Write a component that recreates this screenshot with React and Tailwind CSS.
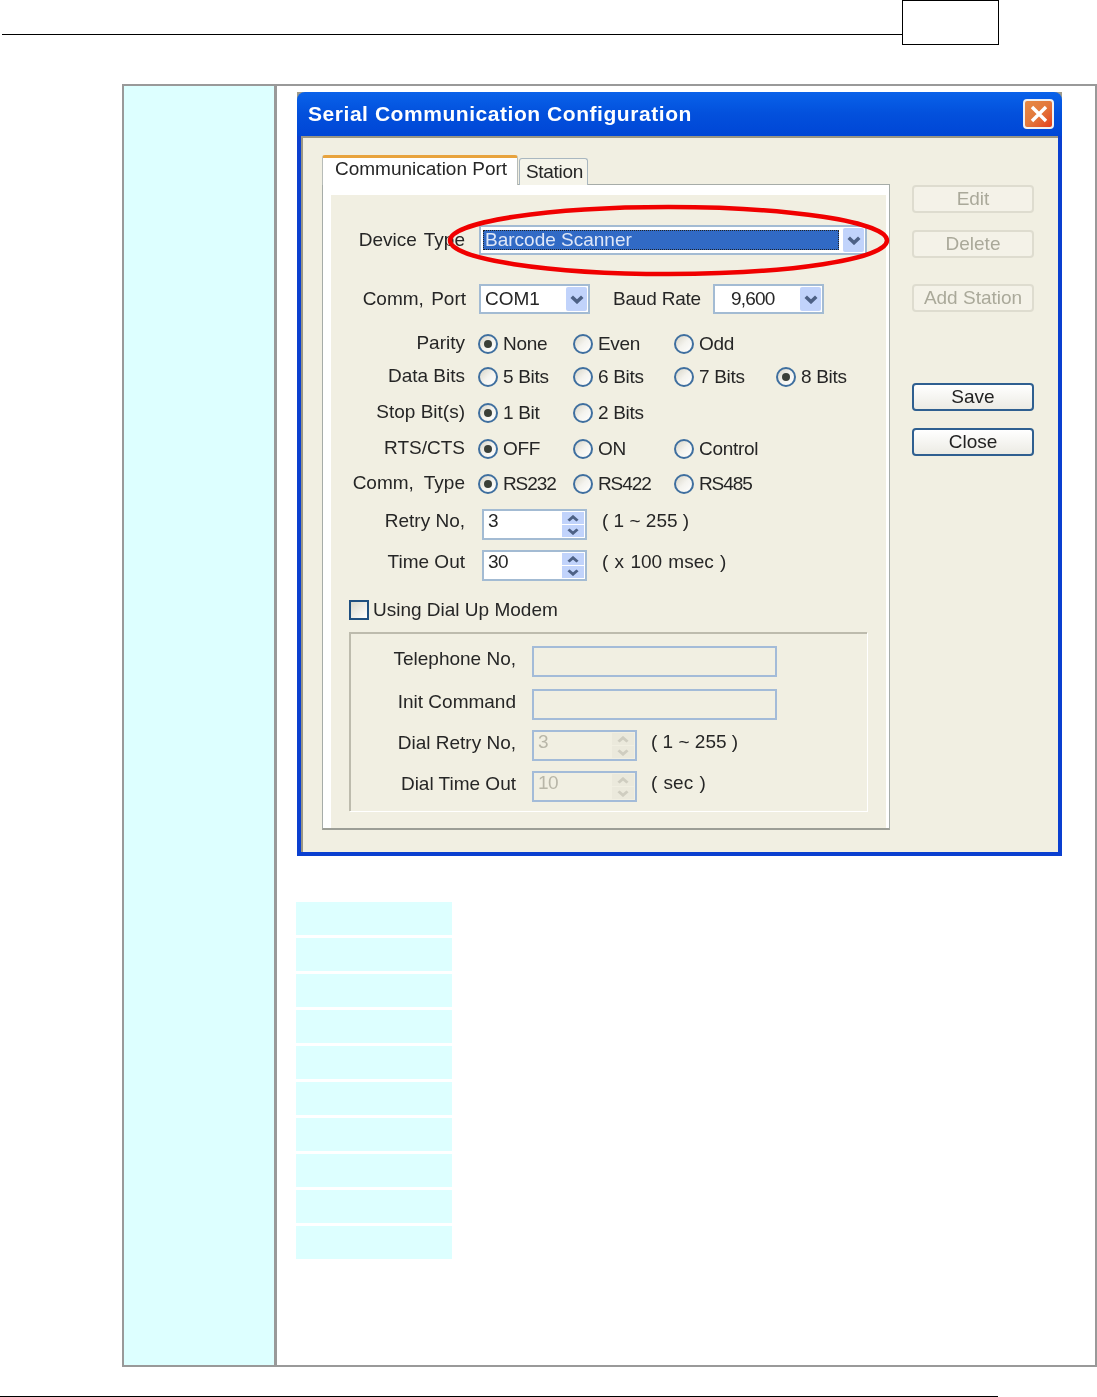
import React from "react";

const Chevron = ({ up = false, color = "#4d6185", w = 14, h = 9 }) => (
  <svg width={w} height={h} viewBox="0 0 12 8" preserveAspectRatio="none" className="block">
    <path
      d={up ? "M1.5 6.5 L6 2 L10.5 6.5" : "M1.5 1.5 L6 6 L10.5 1.5"}
      fill="none"
      stroke={color}
      strokeWidth="3"
    />
  </svg>
);

const Radio = ({ checked, label }) => (
  <div className="flex items-center">
    <div className="flex h-5 w-5 items-center justify-center rounded-full border-2 border-[#3f6f9f] bg-gradient-to-br from-[#d8d5c8] via-[#f4f3ee] to-white">
      {checked && <div className="h-2 w-2 rounded-full bg-[#3a3f38]" />}
    </div>
    <span className={`ml-[5px] whitespace-nowrap ${label.startsWith("RS") ? "tracking-[-1.1px]" : "tracking-[-0.3px]"}`}>
      {label}
    </span>
  </div>
);

const RadioRow = ({ label, mt, options, checkedIndex = 0, labelClass = "" }) => (
  <div className={`flex h-[24px] items-center ${mt}`}>
    <div className={`w-[134px] pb-[2px] text-right ${labelClass}`}>{label}</div>
    <div className="ml-[13px] grid grid-cols-[95px_101px_102px_auto]">
      {options.map((o, i) => (
        <Radio key={i} label={o} checked={i === checkedIndex} />
      ))}
    </div>
  </div>
);

const Combo = ({ width, children }) => (
  <div className={`flex h-[30px] items-center border-2 border-[#a3bbd3] bg-white ${width}`}>
    <div className="flex-1">{children}</div>
    <div className="mr-[1px] flex h-[24px] w-[21px] items-center justify-center rounded-[2px] bg-[#c1d3fb]">
      <Chevron />
    </div>
  </div>
);

const Spin = ({ value, disabled = false }) => (
  <div
    className={`flex h-[31px] w-[105px] items-stretch border-2 ${
      disabled ? "border-[#a3bbd8] bg-[#f1efe2]" : "border-[#a3bbd3] bg-white"
    }`}
  >
    <div className={`flex-1 pl-[4px] leading-[20px] tracking-[-0.6px] ${disabled ? "text-[#b8b6a8]" : ""}`}>{value}</div>
    <div className="mr-[1px] flex w-[22px] flex-col gap-[1px] py-[1px]">
      <div className={`flex flex-1 items-center justify-center ${disabled ? "bg-[#ebe9dc]" : "bg-[#c1d3fb]"}`}>
        <Chevron up color={disabled ? "#cfcdc0" : "#4d6185"} w={12} h={7} />
      </div>
      <div className={`flex flex-1 items-center justify-center ${disabled ? "bg-[#ebe9dc]" : "bg-[#c1d3fb]"}`}>
        <Chevron color={disabled ? "#cfcdc0" : "#4d6185"} w={12} h={7} />
      </div>
    </div>
  </div>
);

const SideButton = ({ label, mt, active = false }) => (
  <div
    className={`flex h-[28px] items-center justify-center rounded-[4px] border-2 ${mt} ${
      active
        ? "border-[#2f5f90] bg-gradient-to-b from-white to-[#ecebe4] text-[#222]"
        : "border-[#dedccf] bg-[#f4f2e8] text-[#aaa99a]"
    }`}
  >
    {label}
  </div>
);

const GroupRow = ({ label, mt, children }) => (
  <div className={`flex items-center ${mt}`}>
    <div className="w-[165px] pb-[5px] text-right">{label}</div>
    <div className="ml-[16px] flex items-center">{children}</div>
  </div>
);

const Dialog = () => (
  <div className="relative ml-[20px] h-[764px] w-[765px] bg-[#a09c8c] blur-[0.35px]">
    <div className="flex h-[44px] items-center justify-between rounded-t-[8px] bg-gradient-to-b from-[#0a62ea] via-[#0350dc] to-[#0046d6] pl-[11px] pr-[8px]">
      <span className="text-[21px] font-bold tracking-[0.55px] text-white">Serial Communication Configuration</span>
      <div className="flex h-[30px] w-[31px] items-center justify-center rounded-[4px] border-2 border-[#f0f0f0] bg-gradient-to-br from-[#e78a45] via-[#e2783c] to-[#e33a1a]">
        <svg width="20" height="20" viewBox="0 0 20 20">
          <path d="M3 3 L17 17 M17 3 L3 17" stroke="#fff" strokeWidth="3.4" />
        </svg>
      </div>
    </div>

    <div className="h-[720px] bg-[#0a3fd0] px-[4px] pb-[4px]">
      <div className="flex h-[716px] border-l-2 border-t-2 border-[#9a9684] bg-[#f1efe2]">
        <div className="ml-[19px] w-[568px] pt-[17px]">
          <div className="relative z-10 -mb-px flex h-[30px] items-end">
            <div className="h-[30px] w-[196px] rounded-t-[3px] border-l border-r border-t-[3px] border-l-[#b7bcb8] border-r-[#b7bcb8] border-t-[#e8a33d] bg-white pl-[12px] leading-[21px]">
              Communication Port
            </div>
            <div className="ml-[1px] h-[27px] w-[69px] rounded-t-[3px] border border-b-0 border-[#a9b7c0] bg-[#f5f4ea] pl-[6px] leading-[26px] tracking-[-0.3px]">
              Station
            </div>
          </div>

          <div className="h-[646px] border border-b-2 border-[#a6aca8] border-b-[#9c9e96] bg-white pl-[8px] pr-[3px] pt-[10px]">
            <div className="h-full bg-[#f1efe2] pt-[30px]">
              <div className="flex h-[30px] items-center">
                <div className="w-[134px] text-right [word-spacing:2px]">Device Type</div>
                <div className="ml-[14px]">
                  <Combo width="w-[388px]">
                    <div className="ml-[2px] mr-[4px] h-[20px] border border-dotted border-[#222] bg-[#316ac5] pl-[1px] leading-[18px] text-[#dfe7f7]">
                      Barcode Scanner
                    </div>
                  </Combo>
                </div>
              </div>

              <div className="mt-[29px] flex h-[30px] items-center">
                <div className="w-[135px] text-right [word-spacing:2px]">Comm, Port</div>
                <div className="ml-[13px]">
                  <Combo width="w-[111px]">
                    <span className="pl-[4px]">COM1</span>
                  </Combo>
                </div>
                <div className="ml-[23px] w-[86px] whitespace-nowrap tracking-[-0.2px]">Baud Rate</div>
                <div className="ml-[14px]">
                  <Combo width="w-[111px]">
                    <span className="pl-[16px] tracking-[-0.8px]">9,600</span>
                  </Combo>
                </div>
              </div>

              <RadioRow label="Parity" mt="mt-[18px]" options={["None", "Even", "Odd"]} />
              <RadioRow label="Data Bits" mt="mt-[9px]" options={["5 Bits", "6 Bits", "7 Bits", "8 Bits"]} checkedIndex={3} />
              <RadioRow label="Stop Bit(s)" mt="mt-[12px]" options={["1 Bit", "2 Bits"]} />
              <RadioRow label="RTS/CTS" mt="mt-[12px]" options={["OFF", "ON", "Control"]} />
              <RadioRow label="Comm, Type" mt="mt-[11px]" options={["RS232", "RS422", "RS485"]} labelClass="[word-spacing:5px]" />

              <div className="mt-[13px] flex items-center">
                <div className="w-[134px] pb-[7px] text-right">Retry No,</div>
                <div className="ml-[17px]">
                  <Spin value="3" />
                </div>
                <div className="ml-[15px] pb-[7px]">( 1 ~ 255 )</div>
              </div>
              <div className="mt-[10px] flex items-center">
                <div className="w-[134px] pb-[7px] text-right">Time Out</div>
                <div className="ml-[17px]">
                  <Spin value="30" />
                </div>
                <div className="ml-[15px] pb-[7px] [word-spacing:1px]">( x 100 msec )</div>
              </div>

              <div className="ml-[18px] mt-[17px] flex h-[24px] items-center">
                <div className="h-[20px] w-[20px] border-2 border-[#1f4f80] bg-gradient-to-br from-[#dcd9cc] to-white" />
                <span className="ml-[4px]">Using Dial Up Modem</span>
              </div>

              <div className="ml-[18px] mt-[10px] h-[179px] w-[518px] border-l-2 border-t-2 border-[#bdbbad] shadow-[1px_1px_0_#fff]">
                <GroupRow label="Telephone No," mt="mt-[12px]">
                  <div className="h-[31px] w-[245px] border-2 border-[#a3bbd8]" />
                </GroupRow>
                <GroupRow label="Init Command" mt="mt-[12px]">
                  <div className="h-[31px] w-[245px] border-2 border-[#a3bbd8]" />
                </GroupRow>
                <GroupRow label="Dial Retry No," mt="mt-[10px]">
                  <Spin value="3" disabled />
                  <div className="ml-[14px] pb-[7px]">( 1 ~ 255 )</div>
                </GroupRow>
                <GroupRow label="Dial Time Out" mt="mt-[10px]">
                  <Spin value="10" disabled />
                  <div className="ml-[14px] pb-[7px] [word-spacing:1px]">( sec )</div>
                </GroupRow>
              </div>
            </div>
          </div>
        </div>

        <div className="ml-[22px] w-[122px] pt-[47px]">
          <SideButton label="Edit" mt="mt-0" />
          <SideButton label="Delete" mt="mt-[17px]" />
          <SideButton label="Add Station" mt="mt-[26px]" />
          <SideButton label="Save" mt="mt-[71px]" active />
          <SideButton label="Close" mt="mt-[17px]" active />
        </div>
      </div>
    </div>

    {/* red marker drawn over the device type combo */}
    <svg width="445" height="75" viewBox="0 0 445 75" className="absolute left-[149px] top-[111px]">
      <ellipse cx="222.5" cy="37.5" rx="218.5" ry="33.5" fill="none" stroke="#f00000" strokeWidth="4.5" />
    </svg>
  </div>
);

export default function App() {
  const rows = [0, 1, 2, 3, 4, 5, 6, 7, 8, 9];

  return (
    <div className="h-[1397px] w-[1097px] overflow-hidden bg-white font-['Liberation_Sans',sans-serif] text-[19px] leading-[24px] text-[#262626]">
      <div className="flex h-[45px] items-start">
        <div className="ml-[2px] mt-[34px] h-px w-[900px] bg-black" />
        <div className="h-[45px] w-[97px] border border-black" />
      </div>

      <div className="ml-[122px] mt-[39px] flex h-[1283px] w-[975px] border-2 border-[#999]">
        <div className="box-content w-[150px] border-r-[3px] border-[#999] bg-[#ddffff]" />
        <div className="flex-1 pt-[6px]">
          <Dialog />
          <div className="ml-[19px] mt-[46px] flex w-[156px] flex-col gap-[3px]">
            {rows.map((r) => (
              <div key={r} className="h-[33px] bg-[#ddffff]" />
            ))}
          </div>
        </div>
      </div>

      <div className="mt-[29px] h-px w-[998px] bg-black" />
    </div>
  );
}
